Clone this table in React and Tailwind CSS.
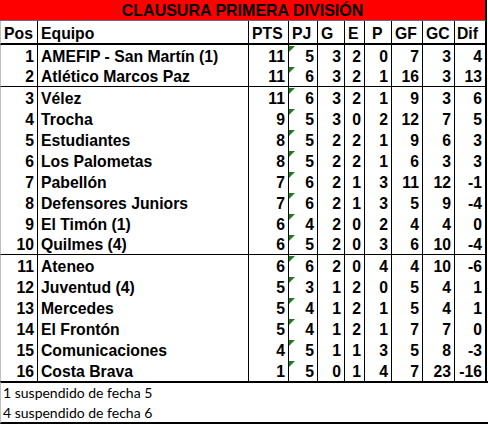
import React from 'react';

const rows = [
  [1, 'AMEFIP - San Martín (1)', 11, 5, 3, 2, 0, 7, 3, 4],
  [2, 'Atlético Marcos Paz', 11, 6, 3, 2, 1, 16, 3, 13],
  [3, 'Vélez', 11, 6, 3, 2, 1, 9, 3, 6],
  [4, 'Trocha', 9, 5, 3, 0, 2, 12, 7, 5],
  [5, 'Estudiantes', 8, 5, 2, 2, 1, 9, 6, 3],
  [6, 'Los Palometas', 8, 5, 2, 2, 1, 6, 3, 3],
  [7, 'Pabellón', 7, 6, 2, 1, 3, 11, 12, -1],
  [8, 'Defensores Juniors', 7, 6, 2, 1, 3, 5, 9, -4],
  [9, 'El Timón (1)', 6, 4, 2, 0, 2, 4, 4, 0],
  [10, 'Quilmes (4)', 6, 5, 2, 0, 3, 6, 10, -4],
  [11, 'Ateneo', 6, 6, 2, 0, 4, 4, 10, -6],
  [12, 'Juventud (4)', 5, 3, 1, 2, 0, 5, 4, 1],
  [13, 'Mercedes', 5, 4, 1, 2, 1, 5, 4, 1],
  [14, 'El Frontón', 5, 4, 1, 2, 1, 7, 7, 0],
  [15, 'Comunicaciones', 4, 5, 1, 1, 3, 5, 8, -3],
  [16, 'Costa Brava', 1, 5, 0, 1, 4, 7, 23, -16],
];

// widths include the 1px right border
const widths = ['w-[37px]', 'w-[211px]', 'w-[40px]', 'w-[29px]', 'w-[27px]', 'w-[20px]', 'w-[27px]', 'w-[31px]', 'w-[32px]', 'w-[30px]'];
const heads = ['Pos', 'Equipo', 'PTS', 'PJ', 'G', 'E', 'P', 'GF', 'GC', 'Dif'];

function Cell({ i, children, right, pad = 'pl-[3px]' }) {
  const last = i === widths.length - 1;
  return (
    <div
      className={`${widths[i]} shrink-0 h-full flex items-end pb-[1px] whitespace-nowrap ${last ? '' : 'border-r border-black'} ${right ? 'justify-end pr-[3px]' : pad} ${i === 3 ? 'relative' : ''}`}
    >
      {children}
    </div>
  );
}

export default function App() {
  return (
    <div className="w-[488px] h-[424px] bg-white text-black font-bold text-[15.75px] leading-none" style={{ fontFamily: '"Liberation Sans", Arial, sans-serif' }}>
      {/* title banner */}
      <div className="h-[21px] bg-[#ff0000] border-b border-[#6d6d6d] border-r-2 border-r-black w-[487px] flex items-center justify-center text-[16px] pt-[1px]">
        CLAUSURA PRIMERA DIVISIÓN
      </div>

      {/* header */}
      <div className="h-[24px] w-[487px] flex border-l border-l-[#bfbfbf] border-r-2 border-r-black border-b-2 border-b-black">
        {heads.map((h, i) => (
          <Cell key={h} i={i} pad={h === 'P' ? 'pl-[7px]' : i === 9 ? 'pl-[2px]' : 'pl-[3px]'}>
            {h}
          </Cell>
        ))}
      </div>

      {/* standings */}
      {rows.map((r, ri) => (
        <div
          key={r[0]}
          className={`h-[21px] w-[487px] flex border-l border-l-[#bfbfbf] border-r-2 border-r-black ${ri === 1 || ri === 9 ? 'border-b border-b-black' : ''}`}
        >
          {r.map((v, i) => (
            <Cell key={i} i={i} right={i !== 1}>
              {i === 3 && (
                <span className="absolute left-0 top-[1px] w-0 h-0 border-t-[6px] border-t-[#18801a] border-r-[6px] border-r-transparent" />
              )}
              {v}
            </Cell>
          ))}
        </div>
      ))}

      {/* notes */}
      <div className="border-t-2 border-black border-b-2 border-l border-l-[#bfbfbf] font-normal text-[14px] pl-[2px]" style={{ fontFamily: 'Lato, "Open Sans", sans-serif' }}>
        <div className="h-[20px] flex items-center">1 suspendido de fecha 5</div>
        <div className="h-[19px] flex items-center">4 suspendido de fecha 6</div>
      </div>
    </div>
  );
}
